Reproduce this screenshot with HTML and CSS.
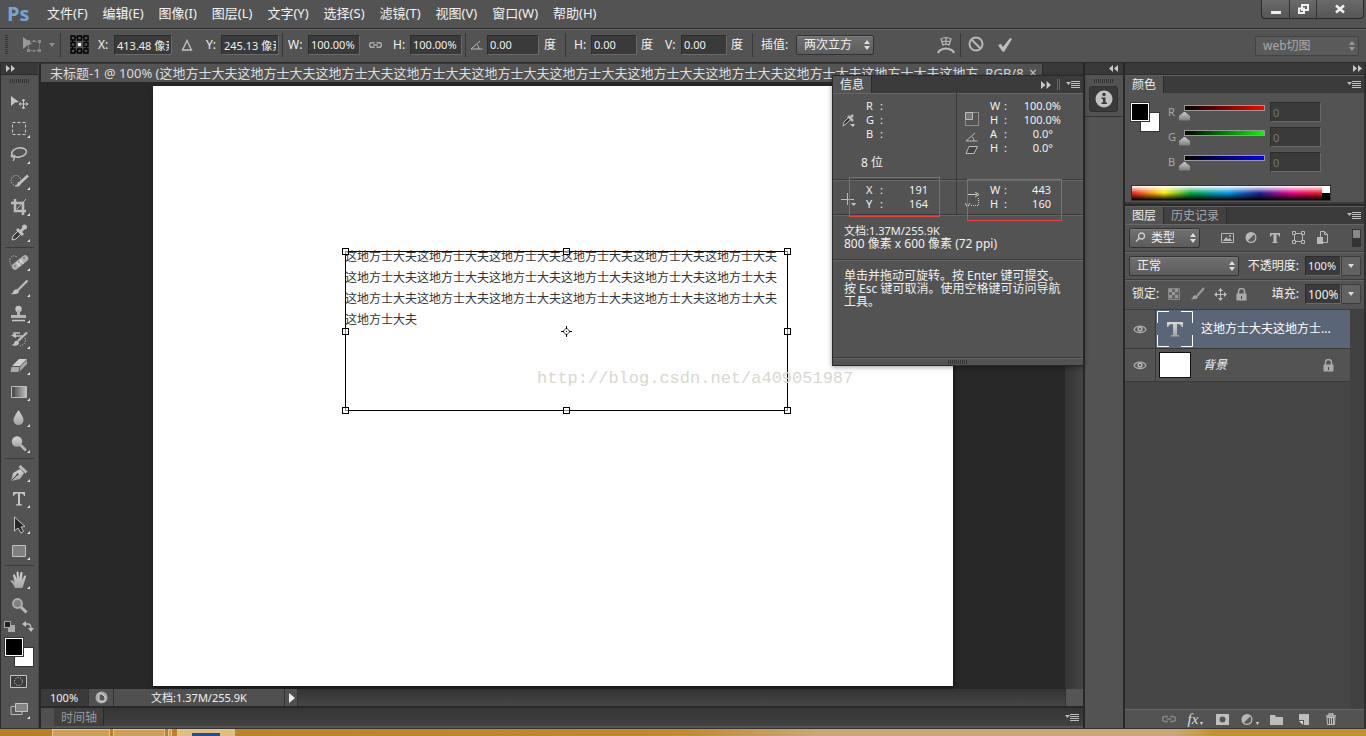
FILE: index.html
```html
<!DOCTYPE html>
<html lang="zh-CN">
<head>
<meta charset="utf-8">
<title>Ps</title>
<link rel="stylesheet" href="styles.css">
</head>
<body>
<svg class="defs" aria-hidden="true">
  <defs>
    <linearGradient id="metal" x1="0" y1="0" x2="0" y2="1"><stop offset="0" stop-color="#d6d6d6"/><stop offset="1" stop-color="#a4a4a4"/></linearGradient>
    <linearGradient id="fade" x1="0" y1="0" x2="1" y2="0"><stop offset="0" stop-color="#404040"/><stop offset="1" stop-color="#c4c4c4"/></linearGradient>
    <symbol id="corner" viewBox="0 0 28 26"><path d="M25 19v3h-3z" fill="#e2e2e2"/></symbol>
    <symbol id="updown" viewBox="0 0 8 10"><path d="M4 0l3 4H1zM4 10l3-4H1z" fill="currentColor"/></symbol>
    <symbol id="menu-lines" viewBox="0 0 14 9"><path d="M0 2h5L2.500 5z" fill="#c0c0c0"/><path d="M5 1.500h9M5 3.500h9M5 5.500h9M5 7.500h9" stroke="#c0c0c0"/></symbol>
    <symbol id="right2" viewBox="0 0 9 7"><path d="M0 0l4 3.500L0 7zM5 0l4 3.500L5 7z" fill="#c8c8c8"/></symbol>
    <symbol id="left2" viewBox="0 0 9 7"><path d="M4 0L0 3.500 4 7zM9 0L5 3.500 9 7z" fill="#c8c8c8"/></symbol>
    <symbol id="link" viewBox="0 0 14 8"><path d="M6 1.500H3a2.500 2.500 0 0 0 0 5h3M8 1.500h3a2.500 2.500 0 0 1 0 5H8M4.500 4h5" fill="none" stroke="currentColor" stroke-width="1.600"/></symbol>
    <symbol id="eye" viewBox="0 0 14 10"><path d="M1 5.500C3 1 11 1 13 5.500 11 9.500 3 9.500 1 5.500z" fill="#555" stroke="#aaa" stroke-width="1.300"/><circle cx="7" cy="5" r="2.600" fill="#b4b4b4"/><circle cx="7" cy="5" r="1" fill="#444"/></symbol>
    <symbol id="lock" viewBox="0 0 11 13"><path d="M2.500 6V3.500a3 3 0 0 1 6 0V6" fill="none" stroke="currentColor" stroke-width="1.500"/><path d="M.5 5.500h10v7H.5z" fill="currentColor"/><path d="M5 8h1v3H5z" fill="#444"/></symbol>
    <symbol id="angle" viewBox="0 0 13 10"><path d="M12.500 9H1L10 1M7 4.500q2 2 2 4.500" fill="none" stroke="#b8b8b8"/></symbol>
    <symbol id="adjust" viewBox="0 0 13 13"><circle cx="6" cy="6.500" r="5.500" fill="#b8b8b8"/><path d="M9 3.500l-6 6a4 4 0 0 0 6-6z" fill="#5c5c5c"/></symbol>
  </defs>
</svg>

<header class="menubar">
  <span class="logo">Ps</span>
  <nav class="menus">
    <a href="#">文件(F)</a><a href="#">编辑(E)</a><a href="#">图像(I)</a><a href="#">图层(L)</a><a href="#">文字(Y)</a><a href="#">选择(S)</a><a href="#">滤镜(T)</a><a href="#">视图(V)</a><a href="#">窗口(W)</a><a href="#">帮助(H)</a>
  </nav>
  <div class="window-controls">
    <button aria-label="最小化"><svg width="12" height="12"><path d="M1 8h10v3H1z" fill="#eee"/></svg></button>
    <button aria-label="还原"><svg width="12" height="12"><path d="M5 2h6v5H5zM2 5.500h5V10H2z" fill="none" stroke="#eee" stroke-width="2"/></svg></button>
    <button class="close" aria-label="关闭"><svg width="12" height="12"><path d="M2 2.500l8 7M10 2.500l-8 7" stroke="#f0f0f0" stroke-width="2.600"/></svg></button>
  </div>
</header>

<section class="options">
  <span class="grip-v"></span>
  <button class="preset" aria-label="变换工具"><svg width="34" height="18"><path d="M6.500 5.500h11v9h-11z" fill="none" stroke="#888" stroke-dasharray="2 1"/><path d="M5 4h3v3H5zM16 4h3v3h-3zM16 13h3v3h-3zM5 13h3v3H5zM11 4h2v2h-2zM11 14h2v2h-2z" fill="#888"/><path d="M1 1l9 7-4 1-5 4z" fill="#9a9a9a"/><path d="M27 7h6l-3 4z" fill="#8d8d8d"/></svg></button>
  <span class="sep"></span>
  <svg width="19" height="19"><path d="M2.500 2.500h14v14h-14z" stroke="#000" fill="none"/><g fill="#555" stroke="#000" stroke-width="1.400"><path d="M1 1h4v4H1zM7.500 1h4v4h-4zM14 1h4v4h-4zM1 7.500h4v4H1zM14 7.500h4v4h-4zM1 14h4v4H1zM7.500 14h4v4h-4zM14 14h4v4h-4z"/></g><path d="M8 8h3v3H8z" fill="#fff"/></svg>
  <label for="ox">X:</label><input class="w58" id="ox" value="413.48 像素">
  <svg width="12" height="12"><path d="M6 1.500L10.500 11h-9z" fill="none" stroke="#c4c4c4" stroke-width="1.300"/></svg>
  <label for="oy">Y:</label><input class="w58" id="oy" value="245.13 像素">
  <span class="sep"></span>
  <label for="ow">W:</label><input class="w52" id="ow" value="100.00%">
  <svg class="muted" width="13" height="8"><use href="#link"/></svg>
  <label for="oh">H:</label><input class="w52" id="oh" value="100.00%">
  <span class="sep"></span>
  <svg width="13" height="10"><use href="#angle"/></svg>
  <input class="w52" aria-label="角度" value="0.00"><span>度</span>
  <span class="sep"></span>
  <label for="sh">H:</label><input class="w46" id="sh" value="0.00"><span>度</span>
  <label for="sv">V:</label><input class="w46" id="sv" value="0.00"><span>度</span>
  <span class="sep"></span>
  <label for="interp">插值:</label>
  <div class="select interp"><select id="interp"><option>两次立方</option></select><svg width="8" height="10"><use href="#updown"/></svg></div>
  <button aria-label="变形"><svg width="18" height="18"><path d="M4 3q5-3 10 0l-2 6q-3-2-6 0zM9 1.500V9M5 6q4-2 8 0" fill="none" stroke="#bababa" stroke-width="1.200"/><path d="M1 17q1-3 5-4 3-1 6 0 4 1 5 4" fill="none" stroke="#bababa" stroke-width="2"/></svg></button>
  <span class="sep"></span>
  <button aria-label="取消变换"><svg width="17" height="17"><circle cx="8" cy="8" r="6.500" fill="none" stroke="#b8b8b8" stroke-width="2"/><path d="M3.500 3.500l9 9" stroke="#b8b8b8" stroke-width="2"/></svg></button>
  <button aria-label="提交变换"><svg width="17" height="16"><path d="M1 8l3-1 2 3 7-9 2 1-8 13-2-1z" fill="#bebebe"/></svg></button>
  <div class="select workspace-select"><select aria-label="工作区"><option>web切图</option></select><svg width="8" height="10"><use href="#updown"/></svg></div>
</section>

<main class="workspace">
  <aside class="toolbox">
    <div class="dock-head"><svg width="9" height="7"><use href="#right2"/></svg></div>
    <div class="grip"></div>
    <div class="tools">
      <button aria-label="移动"><svg width="28" height="26"><path d="M6 6l8 6-4 .5-4 3.500z" fill="#c4c4c4"/><path d="M18.500 9.500v9M14 14h9M17 11l1.500-2 1.500 2M17 17l1.500 2 1.500-2M16 12.500L14 14l2 1.500M21 12.500l2 1.500-2 1.500" fill="none" stroke="#c8c8c8"/></svg></button>
      <button aria-label="选框"><svg width="28" height="26"><path d="M7.500 6.500h13v12h-13z" fill="none" stroke="#ccc" stroke-dasharray="3 2"/><use href="#corner"/></svg></button>
      <button aria-label="套索"><svg width="28" height="26"><ellipse cx="14" cy="10.500" rx="7.500" ry="4.500" fill="none" stroke="#bebebe" stroke-width="1.600" transform="rotate(-10 14 10)"/><path d="M7 12q-2 3 1 3 3-1 1-2M9 14q1 2-1 5" fill="none" stroke="#bebebe" stroke-width="1.300"/><use href="#corner"/></svg></button>
      <button aria-label="快速选择"><svg width="28" height="26"><circle cx="11" cy="12.500" r="5" fill="none" stroke="#ddd" stroke-dasharray="1 1.500"/><path d="M9 18q3 0 4-4 4-1 3 2-2 4-7 2z" fill="#c2c2c2"/><path d="M15.500 14.500L23 7.500" stroke="#c2c2c2" stroke-width="2.500"/><use href="#corner"/></svg></button>
      <button aria-label="裁剪"><svg width="28" height="26"><path d="M10 5v12h11M6 9h12v12" fill="none" stroke="#bcbcbc" stroke-width="2.500"/><path d="M12 15l9-10" stroke="#bcbcbc"/><use href="#corner"/></svg></button>
      <button aria-label="吸管"><svg width="28" height="26"><path d="M7 20l1-4 6-6 3 3-6 6z" fill="#3b3b3b" stroke="#ccc"/><path d="M12 9l6 6M16 11l4-4" stroke="#bfbfbf" stroke-width="3"/><circle cx="19.500" cy="7" r="2.500" fill="#bfbfbf"/><use href="#corner"/></svg></button>
      <hr>
      <button aria-label="修复画笔"><svg width="28" height="26"><path d="M10 17q-6 1-5-7 2-5 7-2" fill="none" stroke="#ddd" stroke-dasharray="1 1.500"/><path d="M10 17.500l10-8" stroke="#afafaf" stroke-width="6.500" stroke-linecap="round"/><path d="M12.500 16l5-4" stroke="#d0d0d0" stroke-width="5"/><g fill="#444"><circle cx="14" cy="13" r=".7"/><circle cx="16" cy="15" r=".7"/><circle cx="10" cy="17" r=".7"/><circle cx="19" cy="9" r=".7"/></g><use href="#corner"/></svg></button>
      <button aria-label="画笔"><svg width="28" height="26"><path d="M5 19q3 0 4-4 4-2 5 1 0 4-9 3z" fill="#c2c2c2"/><path d="M13 15l9.500-9.500" stroke="#bdbdbd" stroke-width="2.300"/><use href="#corner"/></svg></button>
      <button aria-label="仿制图章"><svg width="28" height="26"><circle cx="13.500" cy="8" r="3.200" fill="#c4c4c4"/><path d="M12 9h3v5h6v3H6v-3h6z" fill="#b5b5b5"/><path d="M7 19.500h13" stroke="#c8c8c8" stroke-width="1.500"/><use href="#corner"/></svg></button>
      <button aria-label="历史记录画笔"><svg width="28" height="26"><path d="M6 18q3 0 4-4 4-1 4 2-1 4-8 2z" fill="#c2c2c2"/><path d="M13 14l9-8.500" stroke="#bdbdbd" stroke-width="2.300"/><path d="M9 9h8M8 6h7" stroke="#bdbdbd" stroke-width="1.500"/><path d="M6 8.500L11 6v5z" fill="#c2c2c2"/><path d="M20 11q2 6-5 8" fill="none" stroke="#ddd" stroke-dasharray="1 1.500"/><use href="#corner"/></svg></button>
      <button aria-label="橡皮擦"><svg width="28" height="26"><path d="M14 6h8l-7 7H7z" fill="#d0d0d0"/><path d="M6.500 14h8l-1 5h-8zM15.500 13.500L22 7v4l-7.500 7.500z" fill="#aaa"/><use href="#corner"/></svg></button>
      <button aria-label="渐变"><svg width="28" height="26"><path d="M6.500 7.500h15v11h-15z" fill="url(#fade)" stroke="#bdbdbd"/><use href="#corner"/></svg></button>
      <button aria-label="模糊"><svg width="28" height="26"><path d="M13.500 5q5.500 8 5 10.500-1 4.500-5 4.500t-5-4.500Q8 13 13.500 5z" fill="url(#metal)"/><use href="#corner"/></svg></button>
      <button aria-label="减淡"><svg width="28" height="26"><circle cx="12" cy="10.500" r="5.200" fill="url(#metal)"/><path d="M15.500 14l5.500 5.500" stroke="#b8b8b8" stroke-width="2.500"/><use href="#corner"/></svg></button>
      <hr>
      <button aria-label="钢笔"><svg width="28" height="26"><path d="M6 21l2-8 7-4 4 4-4 6z" fill="url(#metal)"/><path d="M15.500 5l7 6.500-2 2-7-6.500z" fill="#bbb"/><path d="M6.500 20.500l5.500-5.500" stroke="#444"/><circle cx="12.500" cy="14.500" r="1" fill="#333"/><use href="#corner"/></svg></button>
      <button aria-label="文字"><svg width="28" height="26"><path d="M8 6h12v4h-1q0-2.500-4-2.500V18l2 .5v1h-6v-1l2-.5V7.500Q9 7.500 9 10H8z" fill="#c4c4c4"/><use href="#corner"/></svg></button>
      <button aria-label="路径选择"><svg width="28" height="26"><path d="M9.500 5v14l3.500-3 3 5 2.500-1.500L16 15l4-.5z" fill="#262626" stroke="#c4c4c4"/><use href="#corner"/></svg></button>
      <button aria-label="矩形"><svg width="28" height="26"><path d="M7.500 7.500h13v11h-13z" fill="#808080" stroke="#c0c0c0"/><use href="#corner"/></svg></button>
      <hr>
      <button aria-label="抓手"><svg width="28" height="26"><path d="M10 21q-1-4-4.500-7 1-2 4 1.500L8 8q1-1.500 2 0l2 4-.5-7q1-1 2 0l.5 7 1.500-6.500q1-1 2 0L17 13l2.500-4.500q2-.5 1.500 1L18.500 18l-1 3z" fill="url(#metal)"/><use href="#corner"/></svg></button>
      <button aria-label="缩放"><svg width="28" height="26"><circle cx="12.500" cy="10.500" r="4.500" fill="#808080" stroke="#b0b0b0" stroke-width="1.800"/><path d="M16 14l5.500 5.500" stroke="#b8b8b8" stroke-width="3"/></svg></button>
    </div>
    <div class="mini">
      <button aria-label="默认颜色"><svg width="12" height="11"><path d="M4 4h7v7H4z" fill="#aaa"/><path d="M.5.5h6v6h-6z" fill="#222" stroke="#aaa"/></svg></button>
      <button aria-label="切换颜色"><svg width="12" height="11"><path d="M3 3h3q3 0 3 5" fill="none" stroke="#c0c0c0" stroke-width="1.300"/><path d="M4 0v6L0 3zM6 7h6l-3 4z" fill="#c0c0c0"/></svg></button>
    </div>
    <div class="swatches"><i class="back"></i><i class="front"></i></div>
    <button class="mode" aria-label="快速蒙版"><svg width="18" height="14"><path d="M.5.5h16v12H.5z" fill="#3d3d3d" stroke="#c4c4c4"/><circle cx="8.500" cy="6.500" r="4" fill="none" stroke="#ddd" stroke-dasharray="1 1.500"/></svg></button>
    <button class="screen" aria-label="屏幕模式"><svg width="28" height="26"><path d="M6 9.500h11v8H6z" fill="#555" stroke="#bbb"/><path d="M10.500 6.500h12v8h-12z" fill="#858585" stroke="#c4c4c4"/><use href="#corner"/></svg></button>
  </aside>

  <section class="document">
    <div class="doc-tabs"><div class="doc-tab"><span>未标题-1 @ 100% (这地方士大夫这地方士大夫这地方士大夫这地方士大夫这地方士大夫这地方士大夫这地方士大夫这地方士大夫这地方士大夫这地方士大夫这地方, RGB/8</span><button aria-label="关闭文档">×</button></div></div>
    <div class="view">
      <div class="stage">
        <div class="page">
          <div class="transform">
            <p>这地方士大夫这地方士大夫这地方士大夫这地方士大夫这地方士大夫这地方士大夫这地方士大夫这地方士大夫这地方士大夫这地方士大夫这地方士大夫这地方士大夫这地方士大夫这地方士大夫这地方士大夫这地方士大夫这地方士大夫这地方士大夫这地方士大夫</p>
            <i class="h nw"></i><i class="h n"></i><i class="h ne"></i><i class="h w"></i><i class="h e"></i><i class="h sw"></i><i class="h s"></i><i class="h se"></i>
            <svg class="pivot" width="11" height="11"><path d="M5.500 2L9 5.500 5.500 9 2 5.500z" fill="none" stroke="#333"/><path d="M5.500 0v3M5.500 8v3M0 5.500h3M8 5.500h3M5 5.500h1" stroke="#000"/></svg>
          </div>
          <span class="watermark">http://blog.csdn.net/a409051987</span>
        </div>
      </div>
      <div class="vscroll"></div>
    </div>
    <div class="status">
      <input aria-label="缩放" value="100%">
      <button class="share" aria-label="导出"><svg width="13" height="13"><circle cx="6.500" cy="6.500" r="6" fill="#aaa"/><path d="M4 3h3l3 3v4H4z" fill="#555" stroke="#ddd"/></svg></button>
      <span class="docsize">文档:1.37M/255.9K</span>
      <button class="more" aria-label="更多"><svg width="7" height="10"><path d="M1 0l6 5-6 5z" fill="#eee"/></svg></button>
      <span class="hscroll"></span><span class="size-corner"></span>
    </div>
    <div class="timeline"><span class="stub"></span><button>时间轴</button><svg width="14" height="9"><use href="#menu-lines"/></svg></div>
  </section>

  <aside class="icon-dock">
    <div class="dock-head end"><svg width="9" height="7"><use href="#left2"/></svg></div>
    <div class="grip"></div>
    <button aria-label="信息"><svg width="18" height="18"><circle cx="9" cy="9" r="8.500" fill="#c2c2c2"/><circle cx="9" cy="4.500" r="1.700" fill="#3a3a3a"/><path d="M6.500 7.500h4v5h1.500V14H6.500v-1.500H8V9H6.500z" fill="#3a3a3a"/></svg></button>
    <div class="dock-rest"></div>
  </aside>

  <aside class="panels">
    <div class="dock-head end"><svg width="9" height="7"><use href="#right2"/></svg></div>
    <section class="panel">
      <div class="tabs"><button class="active">颜色</button><svg width="14" height="9"><use href="#menu-lines"/></svg></div>
      <div class="color-body">
        <div class="swatches big"><i class="back"></i><i class="front"></i></div>
        <div class="channels">
          <label for="cr">R</label><input class="red" id="cr" type="range" min="0" max="255" value="0"><input aria-label="R 值" value="0">
          <label for="cg">G</label><input class="green" id="cg" type="range" min="0" max="255" value="0"><input aria-label="G 值" value="0">
          <label for="cb">B</label><input class="blue" id="cb" type="range" min="0" max="255" value="0"><input aria-label="B 值" value="0">
        </div>
        <div class="spectrum"><span class="rainbow"></span><span class="bw"></span></div>
      </div>
    </section>
    <section class="panel layers">
      <div class="tabs"><button class="active">图层</button><button>历史记录</button><svg width="14" height="9"><use href="#menu-lines"/></svg></div>
      <div class="filter-row">
        <div class="select type"><svg class="lens" width="11" height="11"><circle cx="6.500" cy="4" r="3" fill="none" stroke="#ccc" stroke-width="1.300"/><path d="M4.500 6L1 9.500" stroke="#ccc" stroke-width="1.500"/></svg><select aria-label="滤镜类型"><option>类型</option></select><svg width="8" height="10"><use href="#updown"/></svg></div>
        <div class="filters">
          <button aria-label="像素图层"><svg width="13" height="12"><path d="M.5 1.500h12v9H.5z" fill="none" stroke="#b8b8b8"/><path d="M2 9l3-4 2 2 2-1 2 3z" fill="#b8b8b8"/><circle cx="9" cy="4" r="1" fill="#b8b8b8"/></svg></button>
          <button aria-label="调整图层"><svg width="13" height="13"><use href="#adjust"/></svg></button>
          <button aria-label="文字图层"><svg width="12" height="12"><path d="M1 1h10v3.500h-1L9 2.500H7.500V10l1.500.5v.5H3v-.5l1.500-.5V2.500H3L2 4.500H1z" fill="#b8b8b8"/></svg></button>
          <button aria-label="形状图层"><svg width="13" height="13"><path d="M2.500 2.500h8v8h-8z" fill="none" stroke="#b8b8b8"/><path d="M.5.5h3v3h-3zM9.500.5h3v3h-3zM.5 9.500h3v3h-3zM9.500 9.500h3v3h-3z" fill="#555" stroke="#b8b8b8"/></svg></button>
          <button aria-label="智能对象"><svg width="13" height="13"><path d="M4.500.5h4l3 3v8h-7zM8.500.5v3h3" fill="#555" stroke="#b8b8b8"/><path d="M1 6h6v7H1z" fill="#b8b8b8"/></svg></button>
        </div>
        <button class="toggle" aria-label="切换图层过滤"></button>
      </div>
      <div class="mode-row">
        <div class="select blend"><select aria-label="混合模式"><option>正常</option></select><svg width="8" height="10"><use href="#updown"/></svg></div>
        <label for="opacity">不透明度:</label>
        <span class="combo"><input id="opacity" value="100%"><button aria-label="不透明度滑块"><svg width="6" height="4"><path d="M0 0h6L3 4z" fill="#ddd"/></svg></button></span>
      </div>
      <div class="lock-row">
        <span>锁定:</span>
        <div class="locks">
          <button aria-label="锁定透明像素"><svg width="12" height="12"><path d="M.5.5h11v11H.5z" fill="#666" stroke="#888"/><path d="M1 1h3v3H1zM7 1h3v3H7zM4 4h3v3H4zM1 7h3v3H1zM7 7h3v3H7z" fill="#999"/></svg></button>
          <button aria-label="锁定图像像素"><svg width="16" height="14"><path d="M1 12q3 0 3-3 3-2 5 1-1 3-8 2z" fill="#a0a0a0"/><path d="M8 9l7-8" stroke="#999" stroke-width="2"/></svg></button>
          <button aria-label="锁定位置"><svg width="13" height="13"><path d="M6.500 1v11M1 6.500h11" stroke="#bbb"/><path d="M6.500 0L9 3H4zM6.500 13L9 10H4zM0 6.500L3 4v5zM13 6.500L10 4v5z" fill="#bbb"/></svg></button>
          <button aria-label="锁定全部"><svg class="light" width="11" height="13"><use href="#lock"/></svg></button>
        </div>
        <label for="fill">填充:</label>
        <span class="combo"><input id="fill" value="100%"><button aria-label="填充滑块"><svg width="6" height="4"><path d="M0 0h6L3 4z" fill="#ddd"/></svg></button></span>
      </div>
      <div class="list-wrap">
        <div class="layer-list">
          <div class="layer selected"><button class="vis" aria-label="可见性"><svg width="14" height="10"><use href="#eye"/></svg></button>
            <svg width="36" height="36"><path d="M.5 12V.5H12M24 .5h11.500V12M35.500 24v11.500H24M12 35.500H.500V24" fill="none" stroke="#fff"/><path d="M10 11h16v5h-1q-1-3-5-3v11l2.500.5v1h-9v-1L16 24V13q-4 0-5 3h-1z" fill="url(#metal)"/></svg>
            <span>这地方士大夫这地方士...</span></div>
          <div class="layer base"><button class="vis" aria-label="可见性"><svg width="14" height="10"><use href="#eye"/></svg></button><i class="thumb"></i><em>背景</em><svg class="light" width="11" height="13"><use href="#lock"/></svg></div>
        </div>
        <div class="list-scroll"></div>
      </div>
      <div class="layer-actions">
        <button aria-label="链接图层"><svg class="dim" width="14" height="8"><use href="#link"/></svg></button>
        <button class="fx" aria-label="图层样式"><i>fx</i><svg width="3" height="3"><path d="M0 0h3L1.500 3z" fill="#ddd"/></svg></button>
        <button aria-label="图层蒙版"><svg width="13" height="11"><path d="M0 0h13v11H0z" fill="#c0c0c0"/><circle cx="6.500" cy="5.500" r="3" fill="#555"/></svg></button>
        <button class="fx" aria-label="调整"><svg width="13" height="13"><use href="#adjust"/></svg><svg width="3" height="3"><path d="M0 0h3L1.500 3z" fill="#ddd"/></svg></button>
        <button aria-label="新建组"><svg width="13" height="11"><path d="M0 1h5l1 2h7v8H0z" fill="#bdbdbd"/></svg></button>
        <button aria-label="新建图层"><svg width="12" height="11"><path d="M1 0h10v11H6V6H1z" fill="#bdbdbd"/><path d="M1 7h4v4z" fill="#ddd"/></svg></button>
        <button aria-label="删除图层"><svg width="12" height="12"><path d="M1 3h10M4 2.500V1h4v1.500" fill="none" stroke="#bdbdbd" stroke-width="1.300"/><path d="M2 4.500h8l-.5 7h-7zM4.500 5v6M6.500 5v6M8.500 5v6" fill="none" stroke="#bdbdbd"/></svg></button>
      </div>
    </section>
  </aside>
</main>

<section class="info">
  <div class="tabs"><button class="active">信息</button><svg width="10" height="8"><use href="#right2"/></svg><span class="bars"></span><svg width="14" height="9"><use href="#menu-lines"/></svg></div>
  <div class="pair tall">
    <div class="cell">
      <svg width="16" height="16"><path d="M2 14l1-4 5-5 2 2-5 5z" fill="#333" stroke="#bbb"/><path d="M7 4l5 5M10 5l2-2" stroke="#bbb" stroke-width="2.500"/><path d="M9 12h5l-2 3z" fill="#ccc"/></svg>
      <dl><dt>R</dt><dt>:</dt><dd></dd><dt>G</dt><dt>:</dt><dd></dd><dt>B</dt><dt>:</dt><dd></dd></dl>
      <span class="bits">8 位</span>
    </div>
    <div class="cell">
      <div class="icons">
        <svg width="14" height="16"><path d="M.5.5h13v13H.5z" fill="none" stroke="#ccc" stroke-dasharray="1 1"/><path d="M.5.5h7v7h-7z" fill="#777" stroke="#bbb"/></svg>
        <svg width="13" height="10"><use href="#angle"/></svg>
        <svg width="14" height="9"><path d="M4 .500h8.500L9 7.500H1z" fill="#444" stroke="#bbb"/></svg>
      </div>
      <dl><dt>W</dt><dt>:</dt><dd>100.0%</dd><dt>H</dt><dt>:</dt><dd>100.0%</dd><dt>A</dt><dt>:</dt><dd class="deg">0.0°</dd><dt>H</dt><dt>:</dt><dd class="deg">0.0°</dd></dl>
    </div>
  </div>
  <div class="pair">
    <div class="cell"><svg width="16" height="16"><path d="M6.500 1v12M0 7.500h13" stroke="#bbb"/><path d="M10 11h5l-2 3z" fill="#ccc"/></svg><dl><dt>X</dt><dt>:</dt><dd>191</dd><dt>Y</dt><dt>:</dt><dd>164</dd></dl></div>
    <div class="cell"><svg width="15" height="16"><path d="M2.500 14V2.500H12M10 0l4 2.500L10 5M0 11l2.500 4L5 11" fill="none" stroke="#ccc"/><path d="M6 13.500h7.500V6" fill="none" stroke="#ccc" stroke-dasharray="1 1"/></svg><dl><dt>W</dt><dt>:</dt><dd>443</dd><dt>H</dt><dt>:</dt><dd>160</dd></dl></div>
  </div>
  <p class="doc-info">文档:1.37M/255.9K<br><span>800 像素 x 600 像素 (72 ppi)</span></p>
  <p class="hint">单击并拖动可旋转。按 Enter 键可提交。<br>按 Esc 键可取消。使用空格键可访问导航<br>工具。</p>
  <div class="info-foot"><span class="grip"></span></div>
  <i class="mark left"></i><i class="mark right"></i>
</section>

<footer class="taskbar"><span></span><span></span><span class="thin"></span><span class="current"></span></footer>
</body>
</html>
```
FILE: styles.css
```css
* { box-sizing: border-box; }
body {
  margin: 0; height: 100vh; overflow: hidden; position: relative;
  display: flex; flex-direction: column;
  background: #535353; color: #f0f0f0;
  font: 11px/14px "Noto Sans", "Noto Sans CJK SC", sans-serif;
}
button { margin: 0; padding: 0; border: 0; background: none; color: inherit; font: inherit; display: flex; align-items: center; justify-content: center; }
svg { display: block; flex: none; }
i { font-style: normal; }
p, dl, dd { margin: 0; }
.defs { position: absolute; width: 0; height: 0; }
.muted { color: #aaa; }
.dim { color: #858585; }
.light { color: #aaa; }
input, select {
  font: inherit; color: #f0f0f0; background: #3a3a3a; border: 1px solid #2d2d2d;
  border-right-color: #696969; border-bottom-color: #696969; outline: 0; min-width: 0; margin: 0;
}
input { height: 20px; padding: 0 2px; }

/* Menu bar */
.menubar { height: 28px; flex: none; display: flex; padding: 0 2px 0 7px; }
.logo { width: 40px; font: bold 20px/27px "Open Sans", sans-serif; color: #75a5d6; }
.menus { display: flex; gap: 15px; flex: 1; }
.menus a { color: #f2f2f2; text-decoration: none; font-size: 13px; line-height: 27px; }
.window-controls { display: flex; height: 19px; border: 1px solid #292929; border-top: 0; border-radius: 0 0 4px 4px; background: linear-gradient(#6b6b6b, #555); }
.window-controls button { width: 27px; }
.window-controls .close { width: 47px; }
.window-controls button + button { border-left: 1px solid #333; }

/* Options bar */
.options {
  height: 35px; flex: none; display: grid; align-items: center; justify-items: start;
  padding: 0 7px 2px 5px; border-top: 1px solid #2b2b2b; border-bottom: 1px solid #2b2b2b; box-shadow: inset 0 1px #666;
  grid-template-columns: 17px 38px 10px 28px 16px 67px 25px 15px 61px 6px 20px 61px 24px 17px 55px 5px 17px 57px 21px 9px 17px 50px 24px 16px 50px 21px 9px 35px 141px 23px 8px 29px 1fr auto;
}
.options label, .options > span { font-size: 12px; white-space: nowrap; }
.grip-v { width: 3px; height: 20px; background: repeating-linear-gradient(#333 0 1px, #555 1px 2px); }
.sep { width: 1px; height: 24px; background: #383838; }
.w58 { width: 58px; }
.w52 { width: 52px; }
.w46 { width: 46px; }

.select { display: grid; align-items: center; color: #ddd; }
.select select {
  grid-area: 1/1; width: 100%; height: 20px; padding: 0 7px; appearance: none; font-size: 12px; line-height: 16px;
  border: 1px solid #333; border-radius: 2px; background: linear-gradient(#707070, #5c5c5c); box-shadow: inset 0 1px #7c7c7c;
}
.select svg { grid-area: 1/1; justify-self: end; margin-right: 3px; pointer-events: none; z-index: 1; }
.interp { width: 78px; }
.workspace-select { width: 104px; color: #999; margin-top: 3px; }
.workspace-select select { color: #aaa; background: #5a5a5a; border-color: #434343; box-shadow: none; }

/* Workspace */
.workspace { flex: 1; min-height: 0; display: flex; background: #282828; gap: 2px; }
.dock-head { height: 12px; flex: none; display: flex; align-items: center; padding: 0 5px; background: #393939; border-bottom: 1px solid #2b2b2b; }
.dock-head.end { justify-content: flex-end; }
.panels .dock-head { padding-right: 2px; }
.grip { width: 20px; height: 4px; background: repeating-linear-gradient(90deg, #343434 0 1px, #535353 1px 2px); }

.toolbox { width: 39px; flex: none; display: flex; flex-direction: column; background: #535353; border-left: 1px solid #2b2b2b; border-right: 1px solid #444; }
.toolbox > .grip { margin: 4px 0 7px 9px; }
.tools { display: flex; flex-direction: column; }
.tools button { height: 26px; }
.tools svg { margin-right: 1px; }
.tools hr { width: 29px; height: 1px; margin: 1px auto 1px 4px; border: 0; background: #3b3b3b; }
.mini { display: flex; justify-content: space-between; padding: 2px 4px 5px 3px; }
.swatches { display: grid; width: 30px; height: 30px; margin-left: 3px; }
.swatches i { grid-area: 1/1; width: 20px; height: 20px; border: 1px solid #333; }
.swatches .front { background: #000; box-shadow: inset 0 0 0 1px #fff; }
.swatches .back { background: #fff; place-self: end; }
.mode { height: 14px; margin-top: 8px; padding-right: 2px; }
.screen { height: 26px; margin-top: 8px; padding-right: 1px; }

.document { flex: 1; min-width: 0; display: flex; flex-direction: column; }
.doc-tabs { height: 19px; flex: none; padding-top: 1px; background: #393939; }
.doc-tab { width: 1002px; max-width: 100%; height: 18px; padding: 0 5px 0 9px; display: flex; justify-content: space-between; background: #535353; color: #ddd; font-size: 13px; line-height: 18px; white-space: nowrap; border-right: 1px solid #2b2b2b; }
.doc-tab span { overflow: hidden; }
.doc-tab button { font-size: 14px; color: #ccc; }
.view { flex: 1; min-height: 0; display: flex; }
.stage { flex: 1; display: flex; align-items: center; justify-content: center; min-width: 0; overflow: hidden; }
.page { position: relative; width: 800px; height: 600px; flex: none; background: #fff; box-shadow: 1px 2px 4px #0008; }
.vscroll { width: 18px; background: linear-gradient(90deg, #343434, #444); }
.transform { position: absolute; left: 192px; top: 165px; width: 443px; height: 160px; border: 1px solid #000; }
.transform p { position: absolute; left: -1px; top: -6px; width: 443px; color: #333; font-size: 12px; line-height: 21px; word-break: break-all; }
.h { position: absolute; width: 7px; height: 7px; border: 1px solid #000; background: #fff8; }
.nw, .n, .ne { top: -4px; }
.sw, .s, .se { bottom: -4px; }
.nw, .w, .sw { left: -4px; }
.ne, .e, .se { right: -4px; }
.n, .s { left: calc(50% - 4px); }
.w, .e { top: calc(50% - 3px); }
.pivot { position: absolute; left: calc(50% - 6px); top: calc(50% - 5px); }
.watermark { position: absolute; left: 384px; top: 282px; font: 17px/22px "Liberation Mono", monospace; color: #d8d8d0; }

.status { height: 18px; flex: none; display: flex; align-items: stretch; gap: 1px; border-bottom: 1px solid #282828; background: #333; }
.status input { width: 47px; height: 17px; border: 0; padding: 0 9px; }
.status button, .docsize { background: #505050; }
.share { width: 24px; }
.docsize { width: 170px; text-align: center; font-size: 11px; line-height: 17px; }
.more { width: 12px; }
.hscroll { flex: 1; background: linear-gradient(#333, #464646); }
.size-corner { width: 17px; background: #555; }
.timeline { height: 20px; flex: none; display: flex; align-items: center; margin-top: 1px; background: linear-gradient(#353535, #424242); border-bottom: 2px solid #555; padding-right: 4px; }
.stub { width: 13px; align-self: stretch; background: #505050; }
.timeline button { align-self: stretch; padding: 1px 6px 0 7px; font-size: 12px; color: #999; background: #404040; border-right: 1px solid #282828; }
.timeline svg { margin-left: auto; }

.icon-dock { width: 38px; flex: none; display: flex; flex-direction: column; background: #535353; }
.icon-dock > .grip { margin: 4px 0 3px 9px; }
.icon-dock button { height: 26px; margin: 0 5px 4px 4px; border: 1px solid #303030; border-radius: 3px; background: #393939; }
.dock-rest { flex: 1; border-top: 1px solid #333; }

/* Panels */
.panels { width: 241px; flex: none; display: flex; flex-direction: column; border-right: 2px solid #303030; }
.panel { background: #535353; margin-bottom: 2px; border-top: 1px solid #606060; }
.tabs { height: 17px; display: flex; align-items: center; padding-right: 3px; background: #3b3b3b; }
.tabs button { height: 17px; padding: 0 7px; color: #a8a8a8; font-size: 12px; background: #414141; border-right: 1px solid #2c2c2c; }
.tabs .active { color: #eee; background: #535353; }
.tabs button + svg { margin-left: auto; }
.color-body { height: 111px; display: grid; grid-template-columns: 38px 1fr; grid-template-rows: 91px 17px; padding: 1px 33px 0 5px; border-bottom: 2px solid #3b3b3b; }
.big { margin: 8px 0 0; }
.channels { display: grid; grid-template-columns: 11px 91px 51px; grid-auto-rows: 20px; row-gap: 5px; padding-top: 8px; align-items: center; color: #aaa; }
.channels input { height: 20px; color: #777; }
.channels input[type="range"] {
  appearance: none; width: 91px; padding: 0; border: 0; height: 17px;
  background-position: 6px 2px, 5px 1px; background-size: 79px 4px, 81px 6px; background-repeat: no-repeat; background-color: transparent;
}
.channels .red { background-image: linear-gradient(90deg, #000, #f00), linear-gradient(#999, #999); }
.channels .green { background-image: linear-gradient(90deg, #000, #0f0), linear-gradient(#999, #999); }
.channels .blue { background-image: linear-gradient(90deg, #000, #00f), linear-gradient(#999, #999); }
.channels input::-webkit-slider-runnable-track { height: 17px; }
.channels input::-webkit-slider-thumb { appearance: none; width: 11px; height: 9px; margin-top: 8px; background: linear-gradient(#ccc, #777); clip-path: polygon(50% 0, 100% 50%, 100% 100%, 0 100%, 0 50%); }
.spectrum { grid-column: 1 / 3; display: flex; width: 200px; height: 16px; border: 1px solid #333; margin-left: 1px; }
.rainbow { flex: 1; background: linear-gradient(#fff, #fff0 50%, #0000 50%, #000), linear-gradient(90deg, #e22, #fe0 17%, #0a4 31%, #09e 50%, #229 67%, #e08 84%, #e22); }
.bw { width: 8px; background: linear-gradient(#fff 50%, #000 50%); }

.layers { flex: 1; min-height: 0; display: flex; flex-direction: column; margin-bottom: 0; }
.layers > .tabs { flex: none; }
.filter-row, .mode-row, .lock-row { flex: none; display: flex; align-items: center; height: 28px; padding: 0 3px 0 4px; border-bottom: 1px solid #3c3c3c; box-shadow: inset 0 1px #666; }
.lock-row { height: 30px; padding-left: 7px; padding-bottom: 1px; }
.type { width: 71px; }
.type select { padding-left: 21px; }
.type .lens { justify-self: start; margin-left: 6px; }
.filters { display: flex; gap: 11px; margin-left: 21px; align-items: center; }
.toggle { width: 9px; height: 18px; margin-left: auto; border: 1px solid #333; background: linear-gradient(#888 50%, #333 50%); }
.blend { width: 110px; }
.mode-row label, .lock-row label, .lock-row > span { font-size: 12px; white-space: nowrap; }
.mode-row label, .lock-row label { margin-left: auto; margin-right: 6px; }
.combo { display: flex; }
.combo input { width: 36px; }
.combo button { width: 20px; height: 20px; border: 1px solid #3c3c3c; border-radius: 0 2px 2px 0; background: #626262; }
.locks { display: flex; align-items: center; gap: 9px; margin-left: 9px; }
.list-wrap { flex: 1; display: flex; min-height: 0; background: #464646; }
.layer-list { flex: 1; }
.list-scroll { width: 14px; background: #414141; }
.layer { height: 39px; display: flex; align-items: center; border-bottom: 1px solid #3a3a3a; background: #535353; font-size: 12px; }
.vis { width: 31px; align-self: stretch; flex: none; background: #535353; border-right: 1px solid #3a3a3a; margin-right: 1px; }
.layer.selected { background: #5a6678; color: #fff; }
.selected span { margin-left: 8px; white-space: nowrap; }
.base { height: 33px; padding-right: 16px; }
.thumb { width: 32px; height: 26px; margin: 0 12px 0 2px; background: #fff; border: 1px solid #111; }
.base .light { margin-left: auto; }
.layer-actions { height: 19px; flex: none; display: grid; grid-template-columns: repeat(7, 27px); justify-content: end; border-top: 1px solid #666; padding-right: 20px; background: #535353; }
.fx { gap: 2px; align-items: center; }
.fx > i { font: italic 15px/14px "Liberation Serif", serif; color: #ddd; }
.fx > svg:last-child { align-self: flex-end; margin-bottom: 3px; }

/* Floating info panel */
.info { position: absolute; left: 832px; top: 75px; width: 252px; background: #535353; border: 1px solid #2a2a2a; box-shadow: 0 1px 5px #0006; }
.bars { width: 3px; height: 11px; margin: 0 6px; border: solid #666; border-width: 0 1px; }
.pair { display: grid; grid-template-columns: 124px 1fr; height: 35px; border-bottom: 1px solid #3a3a3a; box-shadow: inset 0 1px #666; }
.pair.tall { height: 87px; }
.cell { display: grid; grid-template-columns: 25px 1fr; align-content: start; padding: 3px 28px 0 8px; }
.cell:first-child { border-right: 1px solid #3a3a3a; }
.cell:last-child { padding-right: 32px; }
.pair.tall .cell { padding-top: 6px; }
.pair.tall .cell:last-child { padding-right: 22px; }
.cell > svg { align-self: center; }
.pair:not(.tall) svg { margin-top: 5px; }
.icons { display: grid; gap: 4px; align-content: end; }
.cell dl { display: grid; grid-template-columns: 14px 8px 1fr; grid-auto-rows: 14px; }
dt { white-space: nowrap; }
dd { text-align: right; }
.deg { padding-right: 8px; }
.bits { grid-column: 1 / 3; padding: 15px 0 0 20px; font-size: 12px; }
.doc-info, .hint { padding: 9px 0 0 11px; font-size: 11px; line-height: 13px; white-space: nowrap; border-bottom: 1px solid #3a3a3a; box-shadow: inset 0 1px #666; }
.doc-info { height: 45px; }
.doc-info span, .hint { font-size: 12px; }
.hint { height: 98px; }
.info-foot { height: 7px; display: grid; place-items: center; box-shadow: inset 0 1px #666; }
.mark { position: absolute; border: 1px solid #e84343; }
.mark.left { left: 16px; top: 101px; width: 91px; height: 40px; }
.mark.right { left: 134px; top: 103px; width: 95px; height: 42px; }

.taskbar { height: 8px; flex: none; display: flex; gap: 3px; padding-left: 52px; background: linear-gradient(90deg, #b97f27, #c18a30 50%, #c8a878 60%, #c8a878 86%, #c3922e 89%); border-top: 1px solid #333; }
.taskbar span { width: 58px; border: solid #e2c490; border-width: 1px 1px 0; background: #cda05a; }
.taskbar span:nth-child(2) { width: 52px; }
.taskbar .thin { width: 4px; margin-right: 2px; }
.taskbar .current { background: linear-gradient(#1d4f9e, #1d4f9e) 50% 100% / 28px 3px no-repeat, #e0c080; }
```
